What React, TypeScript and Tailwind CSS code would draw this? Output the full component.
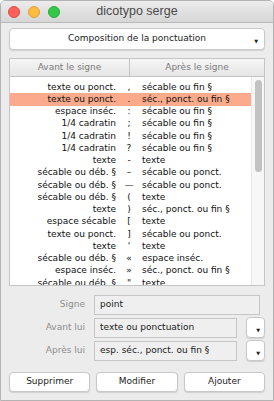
import React from "react";

const ROWS: [string, string, string][] = [
  ["texte ou ponct.", ",", "sécable ou fin §"],
  ["texte ou ponct.", ".", "séc., ponct. ou fin §"],
  ["espace inséc.", ":", "sécable ou fin §"],
  ["1/4 cadratin", ";", "sécable ou fin §"],
  ["1/4 cadratin", "!", "sécable ou fin §"],
  ["1/4 cadratin", "?", "sécable ou fin §"],
  ["texte", "-", "texte"],
  ["sécable ou déb. §", "–", "sécable ou ponct."],
  ["sécable ou déb. §", "—", "sécable ou ponct."],
  ["sécable ou déb. §", "(", "texte"],
  ["texte", ")", "séc., ponct. ou fin §"],
  ["espace sécable", "[", "texte"],
  ["texte ou ponct.", "]", "sécable ou ponct."],
  ["texte", "'", "texte"],
  ["sécable ou déb. §", "«", "espace inséc."],
  ["espace inséc.", "»", "séc., ponct. ou fin §"],
  ["sécable ou déb. §", "\"", "texte"],
];

const SELECTED = 1;

function Arrow() {
  return <span className="text-[5px] leading-none text-[#222]">▼</span>;
}

function Field({ value, narrow }: { value: string; narrow?: boolean }) {
  return (
    <div
      className={`h-[20px] flex items-center pl-[5px] border border-[#c6c6c6] bg-[#efefef] text-[9px] text-[#1a1a1a] ${
        narrow ? "w-[143px]" : "w-[166px]"
      }`}
    >
      {value}
    </div>
  );
}

function MiniPopup() {
  return (
    <div className="w-[19px] h-[21px] bg-white rounded-[4px] border border-[#c8c8c8] shadow-[0_1px_1px_rgba(0,0,0,0.12)] flex items-end justify-end pr-[4px] pb-[4px]">
      <Arrow />
    </div>
  );
}

export default function App() {
  return (
    <div
      className="w-[274px] h-[401px] bg-[#ececec] flex flex-col border border-[#b3b3b3] rounded-t-[5px] overflow-hidden"
      style={{ fontFamily: '"DejaVu Sans", sans-serif' }}
    >
      {/* title bar */}
      <div className="relative h-[22px] shrink-0 flex items-center justify-center bg-gradient-to-b from-[#ececec] to-[#d6d6d6] border-b border-[#b9b9b9]">
        <div className="absolute left-[7px] top-[5px] flex gap-[8px]">
          <span className="w-[12px] h-[12px] rounded-full bg-[#fc605c] border border-[#de4a45]" />
          <span className="w-[12px] h-[12px] rounded-full bg-[#fdbc40] border border-[#dea033]" />
          <span className="w-[12px] h-[12px] rounded-full bg-[#34c84a] border border-[#27aa35]" />
        </div>
        <span className="text-[12.5px] text-[#4a4a4a]" style={{ fontFamily: '"Liberation Sans", sans-serif' }}>
          dicotypo serge
        </span>
      </div>

      <div className="flex flex-col px-[8px]">
        {/* popup */}
        <div className="relative mt-[5px] h-[22px] bg-white rounded-[4px] border border-[#c9c9c9] shadow-[0_1px_1px_rgba(0,0,0,0.12)] flex items-center justify-center text-[9px] text-[#222]">
          Composition de la ponctuation
          <span className="absolute right-[6px] bottom-[5px] flex">
            <Arrow />
          </span>
        </div>

        {/* table */}
        <div className="mt-[8px] flex flex-col border border-[#c4c4c4] bg-white">
          <div className="flex h-[18px] text-[9px] text-[#7a7a7a] bg-gradient-to-b from-[#f5f5f5] to-[#e6e6e6] border-b border-[#c4c4c4]">
            <div className="w-[120px] flex items-center justify-center border-r border-[#c4c4c4]">Avant le signe</div>
            <div className="flex-1 flex items-center justify-center">Après le signe</div>
          </div>
          <div className="flex h-[208px] overflow-hidden">
            <div className="flex-1 flex flex-col pt-[4px] text-[9px] text-[#111]">
              {ROWS.map(([a, s, b], i) => (
                <div
                  key={i}
                  className={`flex h-[12.25px] shrink-0 items-center leading-none ${i === SELECTED ? "bg-[#fbab8c]" : ""}`}
                >
                  <div className="w-[106px] text-right">{a}</div>
                  <div className="w-[26px] text-center">{s}</div>
                  <div className="flex-1 whitespace-nowrap">{b}</div>
                </div>
              ))}
            </div>
            <div className="w-[13px] shrink-0 bg-[#f7f7f7] border-l border-[#e9e9e9] flex justify-center pt-[3px]">
              <div className="w-[7px] h-[92px] rounded-full bg-[#c2c2c2]" />
            </div>
          </div>
        </div>

        {/* form */}
        <div className="mt-[9px] flex flex-col gap-[2px] text-[9px]">
          <div className="flex items-center gap-[9px]">
            <span className="w-[76px] text-right text-[#8c8c8c]">Signe</span>
            <Field value="point" />
          </div>
          <div className="flex items-center gap-[9px]">
            <span className="w-[76px] text-right text-[#8c8c8c]">Avant lui</span>
            <Field value="texte ou ponctuation" narrow />
            <MiniPopup />
          </div>
          <div className="flex items-center gap-[9px]">
            <span className="w-[76px] text-right text-[#8c8c8c]">Après lui</span>
            <Field value="esp. séc., ponct. ou fin §" narrow />
            <MiniPopup />
          </div>
        </div>

        {/* buttons */}
        <div className="mt-[11px] flex gap-[6px]">
          {["Supprimer", "Modifier", "Ajouter"].map((t) => (
            <button
              key={t}
              className="flex-1 h-[20px] bg-white rounded-[4px] border border-[#c8c8c8] shadow-[0_1px_1px_rgba(0,0,0,0.12)] text-[9px] text-[#222]"
            >
              {t}
            </button>
          ))}
        </div>
      </div>
    </div>
  );
}
